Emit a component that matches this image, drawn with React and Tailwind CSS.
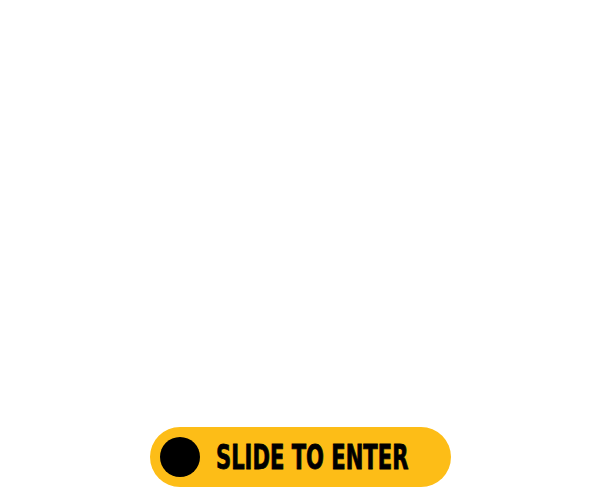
export default function App() {
  return (
    <div className="w-[600px] h-[500px] bg-white flex flex-col items-center justify-end pb-[13px]">
      <div className="w-[301px] h-[60px] rounded-full bg-[#fdbd17] flex items-center pl-[10px]">
        <div className="w-[40px] h-[40px] rounded-full bg-black shrink-0" />
        <span
          className="ml-[16px] text-black text-[33px] font-bold leading-none tracking-[0px] origin-left scale-x-[0.71] whitespace-nowrap [-webkit-text-stroke:0.8px_black]"
          style={{ fontFamily: '"DejaVu Sans Condensed", "DejaVu Sans", sans-serif' }}
        >
          SLIDE TO ENTER
        </span>
      </div>
    </div>
  );
}
